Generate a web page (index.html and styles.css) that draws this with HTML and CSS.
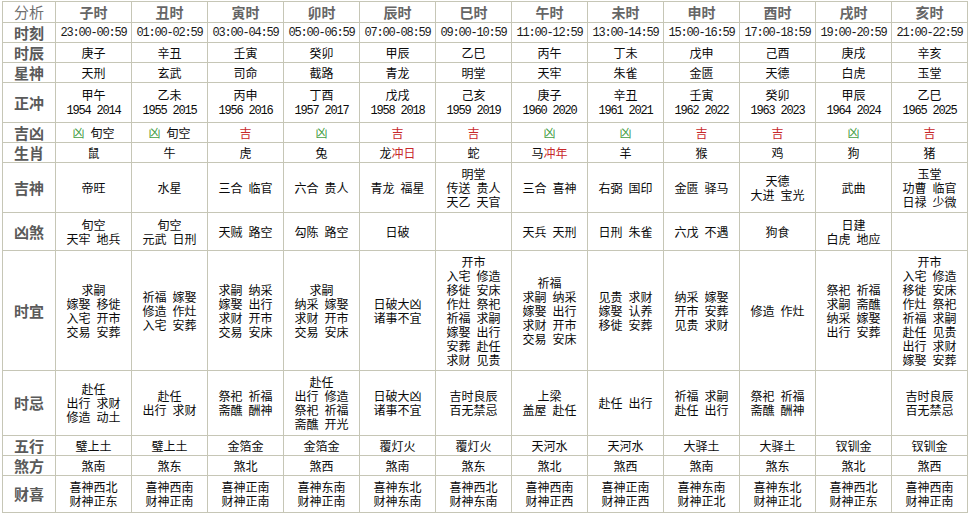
FILE: index.html
```html
<!DOCTYPE html>
<html lang="zh-CN">
<head>
<meta charset="utf-8">
<title>时辰分析</title>
<link rel="stylesheet" href="styles.css">
</head>
<body>
<table class="almanac">
  <colgroup>
    <col class="col-label">
    <col class="col-hour"><col class="col-hour"><col class="col-hour"><col class="col-hour"><col class="col-hour"><col class="col-hour">
    <col class="col-hour"><col class="col-hour"><col class="col-hour"><col class="col-hour"><col class="col-hour"><col class="col-hour">
  </colgroup>
  <tr class="r-head">
    <th class="l plain">分析</th>
    <th class="h">子时</th><th class="h">丑时</th><th class="h">寅时</th><th class="h">卯时</th><th class="h">辰时</th><th class="h">巳时</th><th class="h">午时</th><th class="h">未时</th><th class="h">申时</th><th class="h">酉时</th><th class="h">戌时</th><th class="h">亥时</th>
  </tr>
  <tr class="r-19">
    <th class="l">时刻</th>
    <td class="t">23:00-00:59</td><td class="t">01:00-02:59</td><td class="t">03:00-04:59</td><td class="t">05:00-06:59</td><td class="t">07:00-08:59</td><td class="t">09:00-10:59</td><td class="t">11:00-12:59</td><td class="t">13:00-14:59</td><td class="t">15:00-16:59</td><td class="t">17:00-18:59</td><td class="t">19:00-20:59</td><td class="t">21:00-22:59</td>
  </tr>
  <tr class="r-19">
    <th class="l">时辰</th>
    <td>庚子</td><td>辛丑</td><td>壬寅</td><td>癸卯</td><td>甲辰</td><td>乙巳</td><td>丙午</td><td>丁未</td><td>戊申</td><td>己酉</td><td>庚戌</td><td>辛亥</td>
  </tr>
  <tr class="r-19">
    <th class="l">星神</th>
    <td>天刑</td><td>玄武</td><td>司命</td><td>截路</td><td>青龙</td><td>明堂</td><td>天牢</td><td>朱雀</td><td>金匮</td><td>天德</td><td>白虎</td><td>玉堂</td>
  </tr>
  <tr class="r-chong">
    <th class="l">正冲</th>
    <td>甲午<br><span class="y">1954 2014</span></td>
    <td>乙未<br><span class="y">1955 2015</span></td>
    <td>丙申<br><span class="y">1956 2016</span></td>
    <td>丁酉<br><span class="y">1957 2017</span></td>
    <td>戊戌<br><span class="y">1958 2018</span></td>
    <td>己亥<br><span class="y">1959 2019</span></td>
    <td>庚子<br><span class="y">1960 2020</span></td>
    <td>辛丑<br><span class="y">1961 2021</span></td>
    <td>壬寅<br><span class="y">1962 2022</span></td>
    <td>癸卯<br><span class="y">1963 2023</span></td>
    <td>甲辰<br><span class="y">1964 2024</span></td>
    <td>乙巳<br><span class="y">1965 2025</span></td>
  </tr>
  <tr class="r-19">
    <th class="l">吉凶</th>
    <td><span class="green">凶</span>&ensp;旬空</td>
    <td><span class="green">凶</span>&ensp;旬空</td>
    <td><span class="red">吉</span></td>
    <td><span class="green">凶</span></td>
    <td><span class="red">吉</span></td>
    <td><span class="red">吉</span></td>
    <td><span class="green">凶</span></td>
    <td><span class="green">凶</span></td>
    <td><span class="red">吉</span></td>
    <td><span class="red">吉</span></td>
    <td><span class="green">凶</span></td>
    <td><span class="red">吉</span></td>
  </tr>
  <tr class="r-19">
    <th class="l">生肖</th>
    <td>鼠</td><td>牛</td><td>虎</td><td>兔</td><td>龙<span class="red">冲日</span></td><td>蛇</td><td>马<span class="red">冲年</span></td><td>羊</td><td>猴</td><td>鸡</td><td>狗</td><td>猪</td>
  </tr>
  <tr class="r-jishen">
    <th class="l">吉神</th>
    <td>帝旺</td>
    <td>水星</td>
    <td>三合&ensp;临官</td>
    <td>六合&ensp;贵人</td>
    <td>青龙&ensp;福星</td>
    <td>明堂<br>传送&ensp;贵人<br>天乙&ensp;天官</td>
    <td>三合&ensp;喜神</td>
    <td>右弼&ensp;国印</td>
    <td>金匮&ensp;驿马</td>
    <td>天德<br>大进&ensp;宝光</td>
    <td>武曲</td>
    <td>玉堂<br>功曹&ensp;临官<br>日禄&ensp;少微</td>
  </tr>
  <tr class="r-xiongsha">
    <th class="l">凶煞</th>
    <td>旬空<br>天牢&ensp;地兵</td>
    <td>旬空<br>元武&ensp;日刑</td>
    <td>天贼&ensp;路空</td>
    <td>勾陈&ensp;路空</td>
    <td>日破</td>
    <td></td>
    <td>天兵&ensp;天刑</td>
    <td>日刑&ensp;朱雀</td>
    <td>六戊&ensp;不遇</td>
    <td>狗食</td>
    <td>日建<br>白虎&ensp;地应</td>
    <td></td>
  </tr>
  <tr class="r-yi">
    <th class="l">时宜</th>
    <td>求嗣<br>嫁娶&ensp;移徙<br>入宅&ensp;开市<br>交易&ensp;安葬</td>
    <td>祈福&ensp;嫁娶<br>修造&ensp;作灶<br>入宅&ensp;安葬</td>
    <td>求嗣&ensp;纳采<br>嫁娶&ensp;出行<br>求财&ensp;开市<br>交易&ensp;安床</td>
    <td>求嗣<br>纳采&ensp;嫁娶<br>求财&ensp;开市<br>交易&ensp;安床</td>
    <td>日破大凶<br>诸事不宜</td>
    <td>开市<br>入宅&ensp;修造<br>移徙&ensp;安床<br>作灶&ensp;祭祀<br>祈福&ensp;求嗣<br>嫁娶&ensp;出行<br>安葬&ensp;赴任<br>求财&ensp;见贵</td>
    <td>祈福<br>求嗣&ensp;纳采<br>嫁娶&ensp;出行<br>求财&ensp;开市<br>交易&ensp;安床</td>
    <td>见贵&ensp;求财<br>嫁娶&ensp;认养<br>移徙&ensp;安葬</td>
    <td>纳采&ensp;嫁娶<br>开市&ensp;安葬<br>见贵&ensp;求财</td>
    <td>修造&ensp;作灶</td>
    <td>祭祀&ensp;祈福<br>求嗣&ensp;斋醮<br>纳采&ensp;嫁娶<br>出行&ensp;安葬</td>
    <td>开市<br>入宅&ensp;修造<br>移徙&ensp;安床<br>作灶&ensp;祭祀<br>祈福&ensp;求嗣<br>赴任&ensp;见贵<br>出行&ensp;求财<br>嫁娶&ensp;安葬</td>
  </tr>
  <tr class="r-ji">
    <th class="l">时忌</th>
    <td>赴任<br>出行&ensp;求财<br>修造&ensp;动土</td>
    <td>赴任<br>出行&ensp;求财</td>
    <td>祭祀&ensp;祈福<br>斋醮&ensp;酬神</td>
    <td>赴任<br>出行&ensp;修造<br>祭祀&ensp;祈福<br>斋醮&ensp;开光</td>
    <td>日破大凶<br>诸事不宜</td>
    <td>吉时良辰<br>百无禁忌</td>
    <td>上梁<br>盖屋&ensp;赴任</td>
    <td>赴任&ensp;出行</td>
    <td>祈福&ensp;求嗣<br>赴任&ensp;出行</td>
    <td>祭祀&ensp;祈福<br>斋醮&ensp;酬神</td>
    <td></td>
    <td>吉时良辰<br>百无禁忌</td>
  </tr>
  <tr class="r-19">
    <th class="l">五行</th>
    <td>璧上土</td><td>璧上土</td><td>金箔金</td><td>金箔金</td><td>覆灯火</td><td>覆灯火</td><td>天河水</td><td>天河水</td><td>大驿土</td><td>大驿土</td><td>钗钏金</td><td>钗钏金</td>
  </tr>
  <tr class="r-19">
    <th class="l">煞方</th>
    <td>煞南</td><td>煞东</td><td>煞北</td><td>煞西</td><td>煞南</td><td>煞东</td><td>煞北</td><td>煞西</td><td>煞南</td><td>煞东</td><td>煞北</td><td>煞西</td>
  </tr>
  <tr class="r-caixi">
    <th class="l">财喜</th>
    <td>喜神西北<br>财神正东</td>
    <td>喜神西南<br>财神正南</td>
    <td>喜神正南<br>财神正南</td>
    <td>喜神东南<br>财神正南</td>
    <td>喜神东北<br>财神东南</td>
    <td>喜神西北<br>财神东南</td>
    <td>喜神西南<br>财神正西</td>
    <td>喜神正南<br>财神正西</td>
    <td>喜神东南<br>财神正北</td>
    <td>喜神东北<br>财神正北</td>
    <td>喜神西北<br>财神正东</td>
    <td>喜神西南<br>财神正南</td>
  </tr>
</table>
</body>
</html>
```

FILE: styles.css
```css
html, body {
  margin: 0;
  padding: 0;
  background: #ffffff;
}

body {
  font-family: "Noto Sans CJK SC", "Noto Sans", sans-serif;
  font-size: 12px;
  line-height: 14px;
  color: #0a0a0a;
}

.almanac {
  table-layout: fixed;
  width: 966px;
  border-collapse: separate;
  border-spacing: 1px;
  background: #c6c6b6;
  margin: 1px 0 0 2px;
}

.col-label {
  width: 52px;
}

.col-hour {
  width: 75px;
}

.almanac th,
.almanac td {
  background: #ffffff;
  padding: 0;
  border: 0;
  text-align: center;
  vertical-align: middle;
  white-space: nowrap;
  overflow: hidden;
}

.r-head th { height: 20px; }
.r-19 th, .r-19 td { height: 19px; }
.r-chong th, .r-chong td { height: 39px; }
.r-jishen th, .r-jishen td { height: 49px; }
.r-xiongsha th, .r-xiongsha td { height: 37px; }
.r-yi th, .r-yi td { height: 119px; }
.r-ji th, .r-ji td { height: 64px; }
.r-caixi th, .r-caixi td { height: 36px; }

.almanac .h {
  font-size: 14px;
  font-weight: bold;
  color: #666666;
}

.almanac .l {
  font-size: 15px;
  font-weight: bold;
  color: #5a5a5a;
}

.almanac .l.plain {
  font-weight: normal;
  color: #707070;
}

.t, .y {
  font-family: "Liberation Mono", "DejaVu Sans Mono", monospace;
  font-size: 12px;
  letter-spacing: -1.2px;
}

.t {
  color: #1a1a1a;
}

.red {
  color: #c8282a;
}

.green {
  color: #45a045;
}
```
